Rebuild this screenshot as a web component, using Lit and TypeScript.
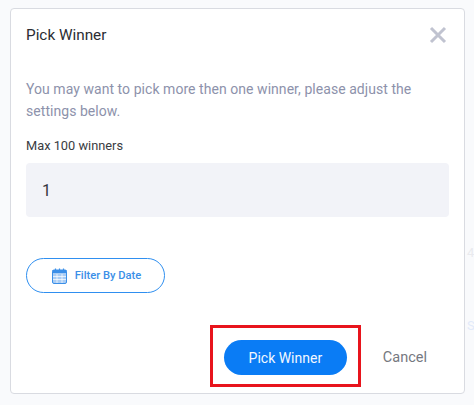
import { LitElement, html, css } from "lit";
import { customElement } from "lit/decorators.js";

@customElement("app-root")
export class AppRoot extends LitElement {
  static styles = css`
    :host {
      display: block;
      position: relative;
      width: 474px;
      height: 405px;
      box-sizing: border-box;
      padding: 8px 9px 11px 10px;
      background: #f9fafc;
      font-family: Roboto, "Liberation Sans", sans-serif;
      overflow: hidden;
    }
    .ghost {
      position: absolute;
      left: 467px;
      font-size: 13px;
      line-height: 16px;
    }
    .ghost.num {
      top: 245px;
      color: #e9eaee;
    }
    .ghost.link {
      top: 318px;
      color: #e2eafa;
    }
    .dialog {
      box-sizing: border-box;
      height: 386px;
      background: #fff;
      border: 1px solid #d9dbe1;
      border-radius: 4px;
      padding: 0 15px;
      display: flex;
      flex-direction: column;
    }
    .head {
      display: flex;
      justify-content: space-between;
      align-items: center;
      height: 52px;
    }
    .title {
      font-size: 15.3px;
      color: #2b2d33;
    }
    .close {
      display: block;
      margin-right: 2px;
    }
    .desc {
      margin: 17px 0 0;
      font-size: 14px;
      line-height: 22px;
      color: #8d92ab;
      letter-spacing: 0.05px;
    }
    .label {
      margin-top: 16px;
      font-size: 12.8px;
      line-height: 16px;
      color: #3a3c42;
    }
    .input {
      margin-top: 9px;
      height: 54px;
      border-radius: 4px;
      background: #f2f3f8;
      display: flex;
      align-items: center;
      padding-left: 16px;
      font-size: 16px;
      color: #33363d;
    }
    .filter {
      margin-top: 41px;
      box-sizing: border-box;
      width: 139px;
      height: 35px;
      padding-left: 2px;
      border: 1px solid #2f8ff0;
      border-radius: 18px;
      display: flex;
      align-items: center;
      justify-content: center;
      gap: 8px;
      color: #3b8fe8;
      font-size: 11.2px;
      font-weight: 500;
    }
    .foot {
      margin-top: auto;
      margin-bottom: 6px;
      display: flex;
      align-items: center;
      justify-content: flex-end;
    }
    .mark {
      box-sizing: border-box;
      width: 151px;
      height: 62px;
      border: 3px solid #e8141c;
      padding-top: 3px;
      display: flex;
      align-items: center;
      justify-content: center;
    }
    .primary {
      width: 123px;
      height: 35px;
      border-radius: 18px;
      background: #0a7cf5;
      color: #f2f8ff;
      display: flex;
      align-items: center;
      justify-content: center;
      font-size: 14px;
    }
    .cancel {
      margin-left: 22px;
      margin-right: 22px;
      padding-top: 3px;
      font-size: 14.5px;
      color: #75787f;
    }
  `;

  render() {
    return html`
      <span class="ghost num">4</span>
      <span class="ghost link">Se</span>
      <div class="dialog">
        <div class="head">
          <span class="title">Pick Winner</span>
          <svg class="close" width="18" height="18" viewBox="0 0 18 18">
            <path d="M2 2 L16 16 M16 2 L2 16" stroke="#c0c3d0" stroke-width="3" fill="none" />
          </svg>
        </div>
        <p class="desc">You may want to pick more then one winner, please adjust the settings below.</p>
        <div class="label">Max 100 winners</div>
        <div class="input">1</div>
        <div class="filter">
          <svg width="15" height="16" viewBox="0 0 15 16">
            <rect x="0.5" y="2" width="14" height="13.5" rx="1.5" fill="#a9cdf5" stroke="#3b8fe8" />
            <rect x="0.5" y="2" width="14" height="3" fill="#3b8fe8" />
            <path d="M3.5 0.5 V3 M7.5 0.5 V3 M11.5 0.5 V3" stroke="#3b8fe8" stroke-width="1.2" />
            <path d="M5 6 V15 M10 6 V15 M1 8.5 H14 M1 11.5 H14" stroke="#fff" stroke-width="0.7" />
          </svg>
          <span>Filter By Date</span>
        </div>
        <div class="foot">
          <div class="mark"><div class="primary">Pick Winner</div></div>
          <span class="cancel">Cancel</span>
        </div>
      </div>
    `;
  }
}
